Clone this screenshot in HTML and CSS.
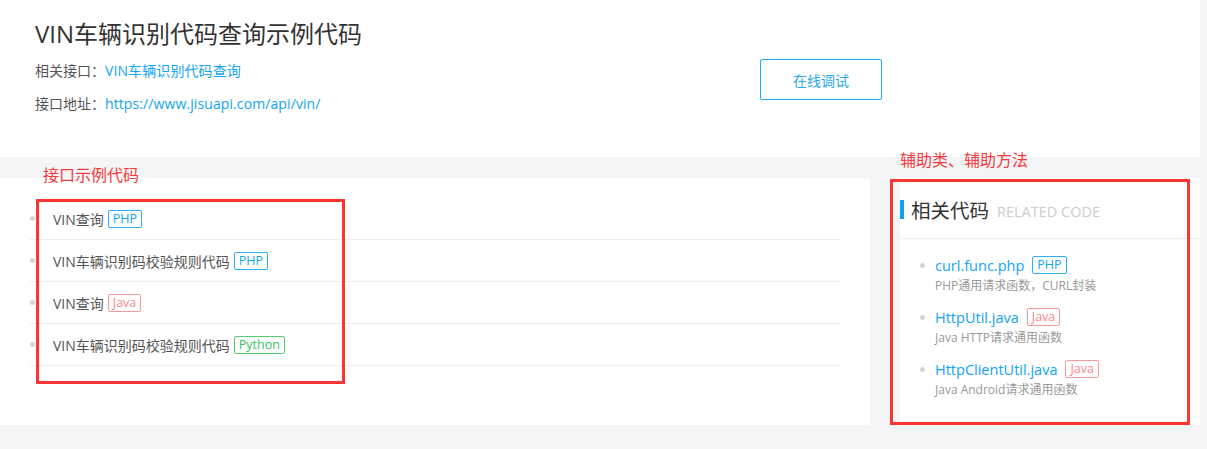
FILE: index.html
```html
<!DOCTYPE html>
<html lang="zh">
<head>
<meta charset="utf-8">
<title>VIN车辆识别代码查询示例代码</title>
<link rel="stylesheet" href="styles.css">
</head>
<body>
<div class="page">
  <header class="top">
    <div class="top-info">
      <h1 class="title">VIN车辆识别代码查询示例代码</h1>
      <p class="meta"><span class="meta-label">相关接口：</span><a class="link" href="#">VIN车辆识别代码查询</a></p>
      <p class="meta"><span class="meta-label">接口地址：</span><a class="link" href="#">https://www.jisuapi.com/api/vin/</a></p>
    </div>
    <a class="btn" href="#">在线调试</a>
  </header>

  <div class="main">
    <section class="panel-left">
      <ul class="code-list">
        <li class="code-item"><span class="dot"></span><span class="code-name">VIN查询</span><span class="tag tag-php">PHP</span></li>
        <li class="code-item"><span class="dot"></span><span class="code-name">VIN车辆识别码校验规则代码</span><span class="tag tag-php">PHP</span></li>
        <li class="code-item"><span class="dot"></span><span class="code-name">VIN查询</span><span class="tag tag-java">Java</span></li>
        <li class="code-item"><span class="dot"></span><span class="code-name">VIN车辆识别码校验规则代码</span><span class="tag tag-python">Python</span></li>
      </ul>
    </section>

    <aside class="panel-right">
      <div class="side-head">
        <span class="side-bar"></span>
        <span class="side-title">相关代码</span>
        <span class="side-sub">RELATED CODE</span>
      </div>
      <ul class="rel-list">
        <li class="rel-item">
          <div class="rel-line"><span class="dot"></span><a class="rel-link" href="#">curl.func.php</a><span class="tag tag-php">PHP</span></div>
          <div class="rel-desc">PHP通用请求函数，CURL封装</div>
        </li>
        <li class="rel-item">
          <div class="rel-line"><span class="dot"></span><a class="rel-link" href="#">HttpUtil.java</a><span class="tag tag-java">Java</span></div>
          <div class="rel-desc">Java HTTP请求通用函数</div>
        </li>
        <li class="rel-item">
          <div class="rel-line"><span class="dot"></span><a class="rel-link" href="#">HttpClientUtil.java</a><span class="tag tag-java">Java</span></div>
          <div class="rel-desc">Java Android请求通用函数</div>
        </li>
      </ul>
    </aside>
  </div>

  <div class="note note-left">接口示例代码</div>
  <div class="note note-right">辅助类、辅助方法</div>
  <div class="mark mark-left"></div>
  <div class="mark mark-right"></div>
</div>
</body>
</html>
```

FILE: styles.css
```css
* { box-sizing: border-box; }
html, body { margin: 0; padding: 0; }
body {
  background: #f4f5f7;
  font-family: "Open Sans", "Noto Sans CJK SC", sans-serif;
  color: #555;
  width: 1207px;
  height: 449px;
  overflow: hidden;
}
a { text-decoration: none; }
ul { list-style: none; margin: 0; padding: 0; }

.page { position: relative; width: 1207px; height: 449px; }

.top {
  width: 1200px;
  height: 157px;
  background: #fff;
  display: flex;
  align-items: flex-start;
  padding: 17px 0 0 35px;
}
.top-info { width: 725px; }
.title {
  margin: 0;
  font-size: 24px;
  line-height: 34px;
  font-weight: normal;
  color: #333;
}
.meta {
  margin: 0;
  font-size: 14px;
  line-height: 20px;
  color: #555;
}
.meta:first-of-type { margin-top: 10px; }
.meta + .meta { margin-top: 13px; }
.link { color: #11a5f2; letter-spacing: 0.1px; }

.btn {
  margin-top: 42px;
  width: 122px;
  height: 41px;
  border: 1px solid #1ab0f5;
  border-radius: 2px;
  display: flex;
  align-items: center;
  justify-content: center;
  color: #2aa8ee;
  font-size: 14px;
}

.main {
  display: flex;
  gap: 30px;
  margin-top: 21px;
  width: 1200px;
}
.panel-left {
  width: 870px;
  height: 247px;
  background: #fff;
  padding: 20px 30px 0 30px;
}
.code-list { width: 810px; }
.code-item {
  height: 42px;
  border-bottom: 1px solid #eeeeee;
  display: flex;
  align-items: center;
  font-size: 14px;
  color: #555;
}
.dot {
  width: 5px;
  height: 5px;
  border-radius: 50%;
  background: #ddd4cb;
  flex: none;
}
.code-item .dot { margin-right: 18px; }
.code-name { margin-right: 4px; }

.tag {
  display: inline-flex;
  align-items: center;
  height: 18px;
  padding: 0 4px;
  border: 1px solid;
  border-radius: 2px;
  font-size: 12.5px;
  line-height: 16px;
}
.tag-php { color: #11a5f2; border-color: #2ab0f5; }
.tag-java { color: #f78a8a; border-color: #f79a9a; }
.tag-python { color: #38c25a; border-color: #55cc70; }

.panel-right {
  width: 300px;
  height: 247px;
  background: #fff;
}
.side-head {
  height: 61px;
  border-bottom: 1px solid #eeeeee;
  display: flex;
  align-items: center;
  padding-top: 3px;
}
.side-bar {
  width: 4px;
  height: 19px;
  background: #0fa4f2;
  margin-right: 7px;
}
.side-title { font-size: 19.5px; color: #333; }
.side-sub { font-size: 14.5px; color: #ccc; margin-left: 8px; padding-top: 3px; }

.rel-list { padding: 16px 0 0 20px; }
.rel-item { margin-bottom: 12px; }
.rel-line {
  display: flex;
  align-items: center;
  height: 20px;
}
.rel-line .dot { margin-right: 10px; }
.rel-link { color: #11a5f2; font-size: 14.5px; margin-right: 8px; }
.rel-desc {
  margin-top: 2px;
  padding-left: 15px;
  font-size: 12px;
  line-height: 18px;
  color: #999;
}

/* annotation overlays */
.note {
  position: absolute;
  color: #f53a3a;
  font-size: 16px;
  line-height: 20px;
}
.note-left { left: 43px; top: 165px; }
.note-right { left: 900px; top: 150px; }
.mark {
  position: absolute;
  border: 3px solid #fc3434;
}
.mark-left { left: 36px; top: 199px; width: 309px; height: 185px; }
.mark-right { left: 890px; top: 179px; width: 300px; height: 246px; }
```
